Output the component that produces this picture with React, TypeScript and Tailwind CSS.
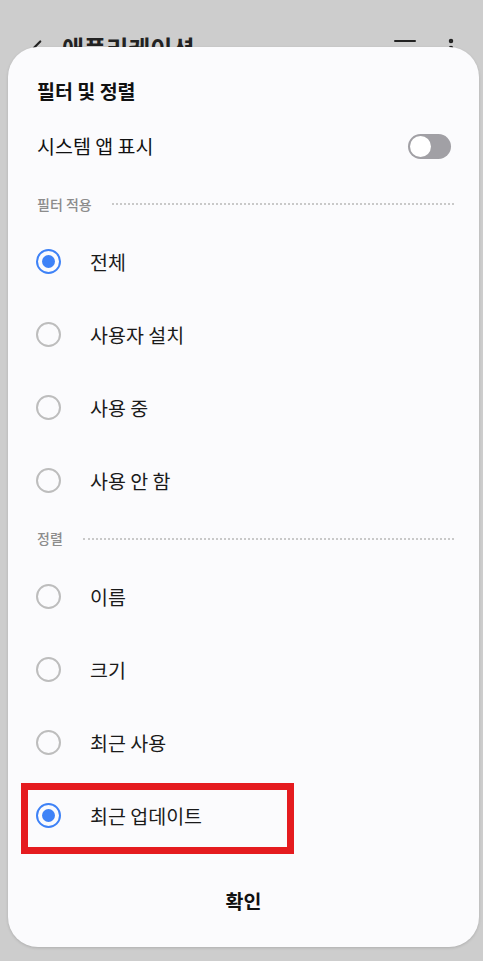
import { ChevronLeft, ListFilter, EllipsisVertical } from "lucide-react";

interface OptionProps {
    label: string;
    checked?: boolean;
    h?: string;
}

const Radio = ({ checked }: { checked?: boolean }) => {
    if (checked) {
        return (
            <div className="flex items-center justify-center w-[25px] h-[25px] rounded-full border-[2.5px] border-[#3e82f7]">
                <div className="w-[13px] h-[13px] rounded-full bg-[#3e82f7]"></div>
            </div>
        );
    }
    return <div className="w-[25px] h-[25px] rounded-full border-2 border-[#bdbdbd]"></div>;
};

const Option = (props: OptionProps) => {
    return (
        <div className="flex items-center h-[73px] pl-[28px]">
            <Radio checked={props.checked} />
            <span className="ml-[29px] text-[19.5px] text-[#1a1a1a]">{props.label}</span>
        </div>
    );
};

const SectionLabel = ({ label, h }: { label: string; h: string }) => (
    <div className={`flex items-center pl-[29px] pr-[25px] ${h}`}>
        <span className="text-[14px] font-medium text-[#8c8c8c]">{label}</span>
        <div className="flex-1 ml-[20px] border-t-2 border-dotted border-[#c9c9c9]"></div>
    </div>
);

export default function App() {
    const filters = ["전체", "사용자 설치", "사용 중", "사용 안 함"];
    const sorts = ["이름", "크기", "최근 사용", "최근 업데이트"];

    return (
        <div
            className="relative w-[483px] h-[961px] overflow-hidden bg-[#cdcdcd]"
            style={{ fontFamily: '"Noto Sans CJK KR", "Noto Sans", sans-serif' }}
        >
            {/* page header behind the sheet */}
            <div className="flex items-center h-[20px] mt-[38px] pl-[24px] pr-[20px] text-[#222]">
                <ChevronLeft size={26} strokeWidth={2} />
                <span className="ml-[12px] text-[24px] font-bold leading-none">애플리케이션</span>
                <div className="flex-1"></div>
                <ListFilter size={24} strokeWidth={2} />
                <EllipsisVertical size={24} strokeWidth={2.5} className="ml-[22px]" />
            </div>

            {/* bottom sheet */}
            <div className="absolute left-[8px] top-[47px] w-[471px] h-[900px] rounded-[30px] bg-[#fbfbfd] shadow-[0_1px_3px_rgba(0,0,0,0.15)]">
                <div className="flex items-center h-[36px] mt-[26px] pl-[29px]">
                    <span className="text-[19.5px] font-bold text-[#111]">필터 및 정렬</span>
                </div>
                <div className="flex items-center justify-between h-[74px] pl-[29px] pr-[28px]">
                    <span className="text-[19.5px] text-[#111]">시스템 앱 표시</span>
                    <div className="flex items-center w-[43px] h-[25px] rounded-full bg-[#a1a0a5] px-[2px]">
                        <div className="w-[21px] h-[21px] rounded-full bg-white"></div>
                    </div>
                </div>

                <SectionLabel label="필터 적용" h="h-[42px]" />
                {filters.map((f, i) => (
                    <Option key={f} label={f} checked={i === 0} />
                ))}

                <SectionLabel label="정렬" h="h-[43px]" />
                {sorts.map((s, i) => (
                    <Option key={s} label={s} checked={i === 3} />
                ))}

                <div className="flex items-center justify-center h-[64px] mt-[17px]">
                    <span className="text-[19.5px] font-bold text-[#111]">확인</span>
                </div>

                {/* highlight annotation */}
                <div className="absolute left-[13px] top-[736px] w-[273px] h-[71px] border-[7px] border-[#e51b1f]"></div>
            </div>
        </div>
    );
}
